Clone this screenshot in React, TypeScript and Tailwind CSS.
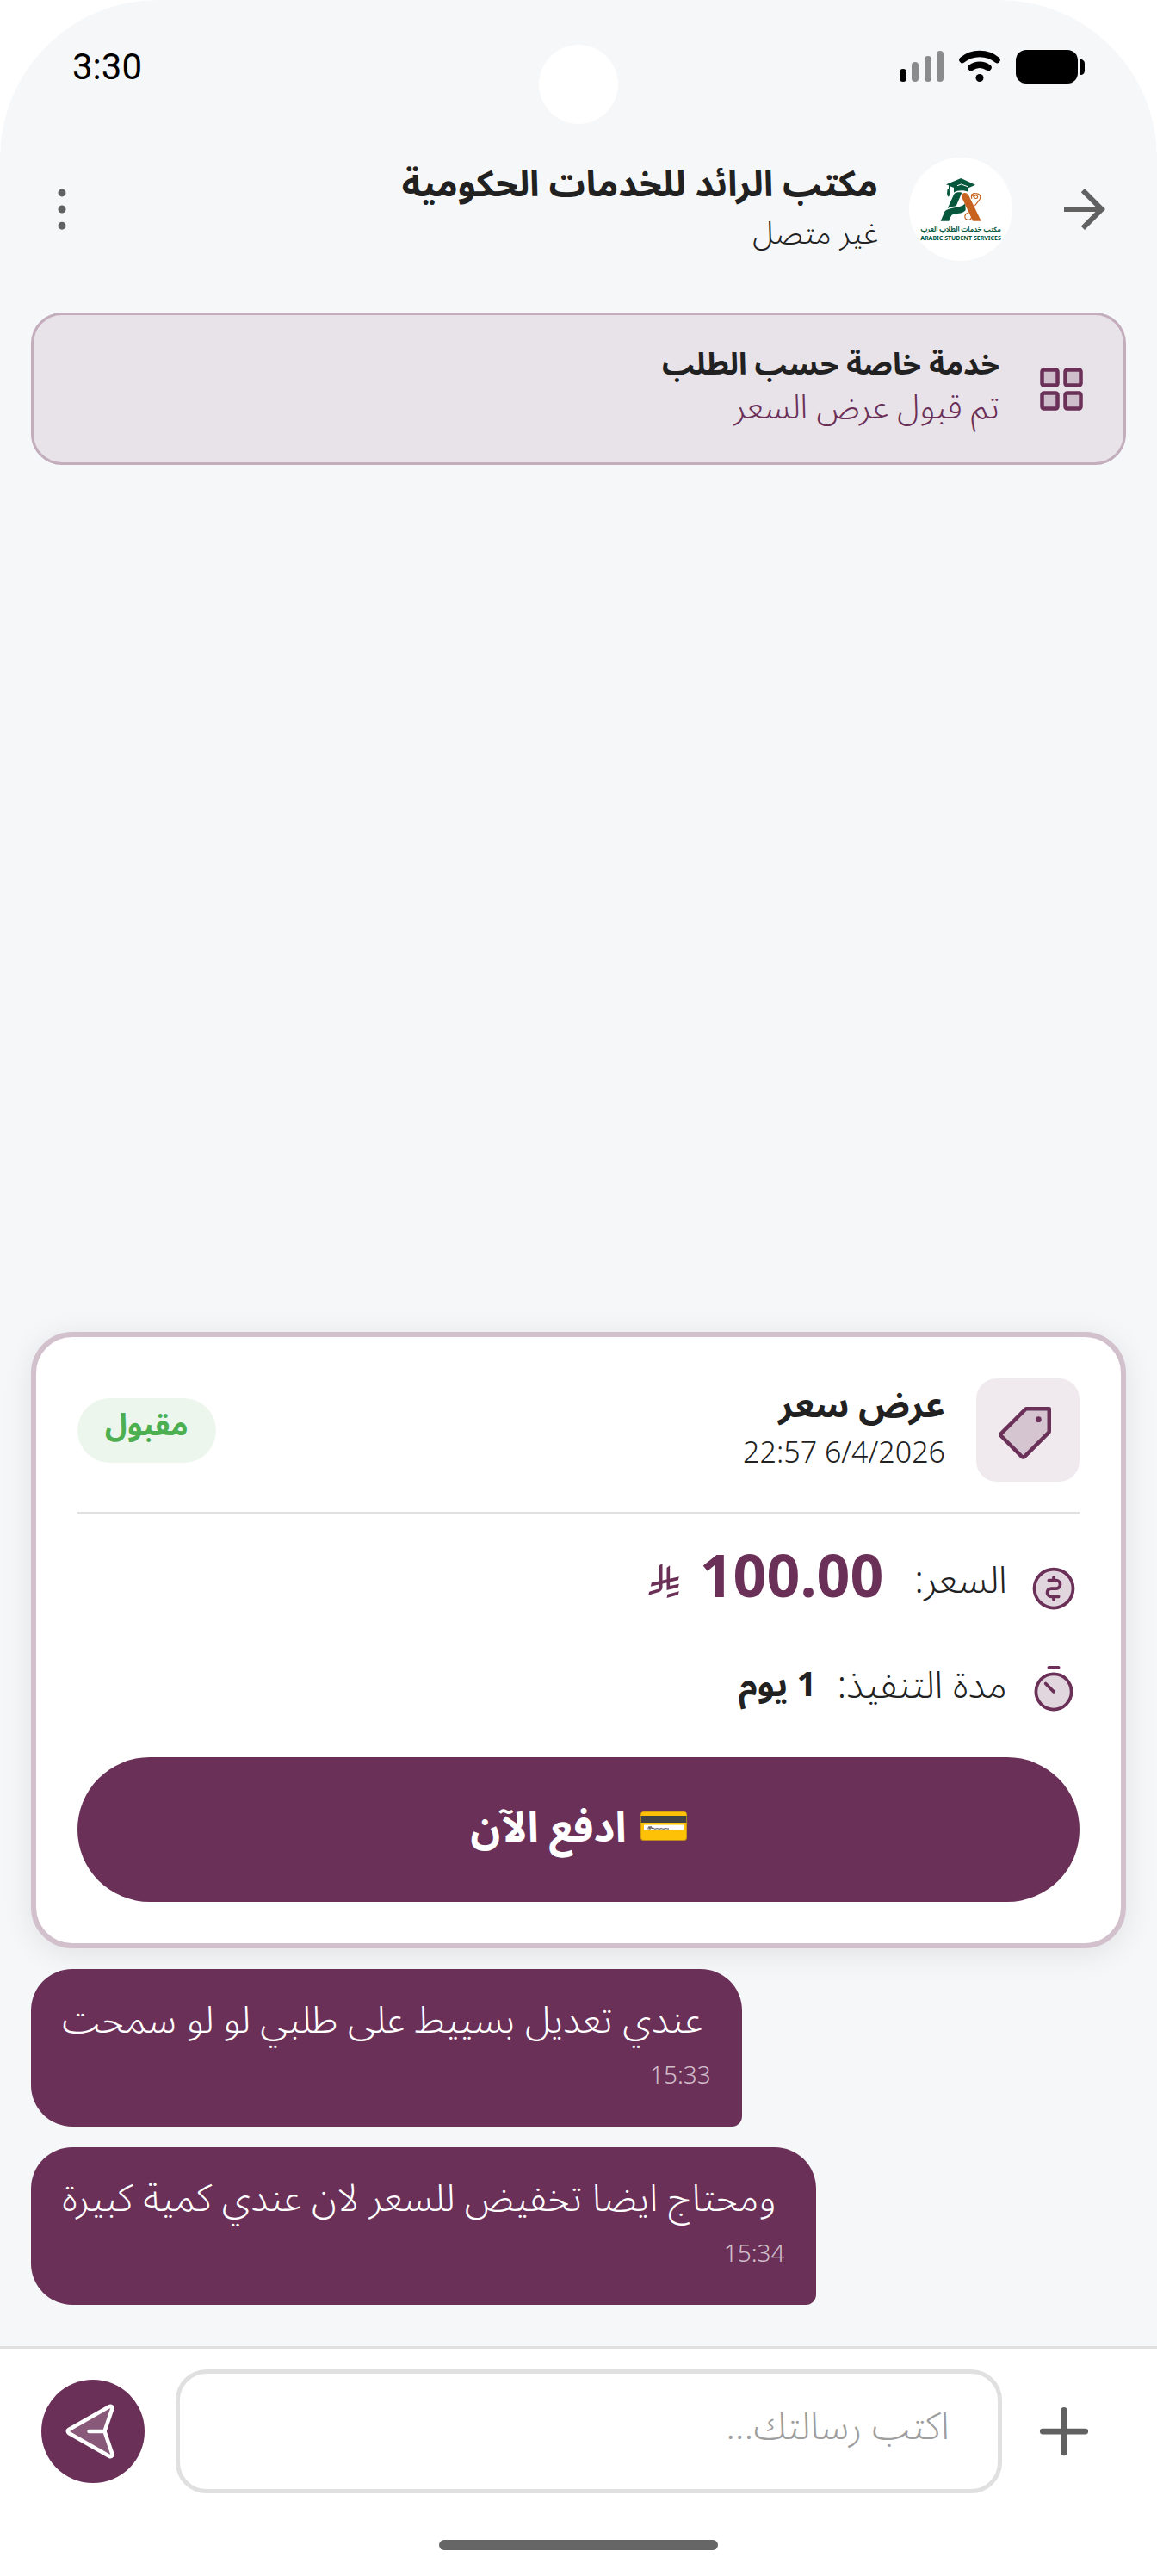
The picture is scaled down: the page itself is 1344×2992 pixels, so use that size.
import React from 'react'
import { MdArrowForward } from 'react-icons/md'
import {
  PiCurrencyCircleDollarDuotone,
  PiDotsThreeVerticalBold,
  PiPaperPlaneRightDuotone,
  PiPlusBold,
  PiSquaresFourDuotone,
  PiTagDuotone,
  PiTimerDuotone,
} from 'react-icons/pi'

const messages = [
  { id: 1, text: 'عندي تعديل بسييط على طلبي لو لو سمحت', time: '15:33' },
  { id: 2, text: 'ومحتاج ايضا تخفيض للسعر لان عندي كمية كبيرة', time: '15:34' },
]

function StatusBar() {
  return (
    <div
      dir="ltr"
      className="relative flex h-[147px] items-center justify-between px-[84px] pt-2"
    >
      <span className="font-[Roboto,sans-serif] text-[42px] leading-[48px] text-black">
        3:30
      </span>
      <div className="absolute top-[52px] left-1/2 h-[92px] w-[92px] -translate-x-1/2 rounded-full bg-white" />
      <svg width="215" height="40" viewBox="0 0 215 40" aria-hidden="true">
        <rect x="0" y="22" width="8" height="15" rx="4" />
        <g fill="#8a8b8c">
          <rect x="14" y="14" width="8" height="23" rx="4" />
          <rect x="29" y="7" width="8" height="30" rx="4" />
          <rect x="43" y="1" width="8" height="36" rx="4" />
        </g>
        <g fill="none" stroke="#000" strokeLinecap="round">
          <path d="M73 11.500C84 2 102 2 113 11.500" strokeWidth="7.500" />
          <path d="M83 20.500C89 16 97 16 103 20.500" strokeWidth="7.500" />
        </g>
        <circle cx="93" cy="32.500" r="4.500" />
        <rect x="135" y="0" width="72" height="39" rx="12" />
        <path d="M210 11c3 0 5 2 5 5v8c0 3-2 5-5 5z" />
      </svg>
    </div>
  )
}

function OfficeLogo() {
  return (
    <svg
      viewBox="48 39 360 360"
      className="h-[120px] w-[120px] shrink-0 rounded-full bg-white"
      role="img"
      aria-label="مكتب خدمات الطلاب العرب"
    >
      <g fill="#07573d">
        <path d="M229 111l50 23-24 11v14c-14-7-37-8-51 2v-17l-15-6v12h-3v-14l-9-3z" />
        <path d="M182 148h6l2 17-3 10h-4l-3-10z" />
        <path d="M205 166c6-6 16-7 27-5l-20 47c-11 2-20 4-30 8z" />
        <path d="M158 260l15-34c12-10 32-12 48-15 10-2 18-6 23-12l1 24c-9 10-24 11-40 13-6 1-9 3-11 8l-7 16z" />
      </g>
      <path d="M216 137l14-5 22 8" fill="none" stroke="#fff" strokeWidth="3" />
      <path
        d="M231 176c-1-17 18-19 25-5l43 89h-29z"
        fill="#c7631f"
      />
      <g fill="none" stroke="#c7631f" strokeWidth="3.500" strokeLinecap="round">
        <path d="M266 181c-3-12 4-18 13-17 16 0 21 11 15 21l-16 21" />
        <path d="M275 178c-2-8 11-10 12-2 0 6-8 7-11 3l-10-11" />
        <path d="M253 232c-14 4-14 22 0 24 7 1 11-3 12-8" />
      </g>
      <g
        fill="#07573d"
        textAnchor="middle"
        fontFamily="Noto Sans, Noto Sans Arabic, sans-serif"
        fontWeight="700"
      >
        <text x="228" y="297" fontSize="23" direction="rtl">
          مكتب خدمات الطلاب العرب
        </text>
        <text x="228" y="326" fontSize="21">
          ARABIC STUDENT SERVICES
        </text>
      </g>
    </svg>
  )
}

function Header() {
  return (
    <header className="flex items-center py-9 pr-12 pl-9">
      <button type="button" aria-label="رجوع" className="text-[#616161]">
        <MdArrowForward size={72} />
      </button>
      <div className="mr-12">
        <OfficeLogo />
      </div>
      <div className="mr-9 flex-1 self-start leading-[58px]">
        <h1 className="text-[42px] font-bold">مكتب الرائد للخدمات الحكومية</h1>
        <p className="text-[36px] font-light">غير متصل</p>
      </div>
      <button type="button" aria-label="المزيد" className="text-[#616161]">
        <PiDotsThreeVerticalBold size={72} />
      </button>
    </header>
  )
}

function ServiceCard() {
  return (
    <section className="flex min-h-[177px] items-center gap-9 rounded-[36px] border-3 border-[#c3adbd] bg-[#e8e2e9] px-9">
      <PiSquaresFourDuotone size={72} className="shrink-0 text-[#6b3058]" />
      <div className="flex-1 pb-3 leading-[49px]">
        <h2 className="text-[35px] font-bold">خدمة خاصة حسب الطلب</h2>
        <p className="text-[39px] font-light text-[#6b3058]">
          تم قبول عرض السعر
        </p>
      </div>
    </section>
  )
}

function RiyalSign() {
  return (
    <svg
      viewBox="82 105 107 120"
      className="mt-[14px] h-10 w-9 text-[#6b3058]"
      fill="currentColor"
      role="img"
      aria-label="ريال"
    >
      <path d="M120 112l11-7v82c0 7-3 13-11 17l-38 11 3-12 31-9c3-1 4-3 4-6z" />
      <path d="M146 120l11-8v71l32-7-3 12-40 10z" />
      <path d="M189 151l-3 12-96 22 3-13z" />
      <path d="M189 202l-3 12-40 11 3-13z" />
    </svg>
  )
}

function CreditCard() {
  return (
    <svg width="54" height="34" viewBox="0 0 54 34" aria-hidden="true">
      <rect width="54" height="34" rx="3.500" fill="#b8891b" />
      <rect x="0.700" y="0.500" width="52.600" height="32.500" rx="3" fill="#ffc107" />
      <rect x="0.700" y="5" width="52.600" height="8" fill="#424242" />
      <rect x="4" y="15.500" width="46" height="6" fill="#fff" />
      <path
        d="M9 20.500c0-4 2-4 2 0 0-4 2-4 2-.5 2-2 3 1 5 0s3 1 5 0 3 1 5 0 3 .5 5 0"
        fill="none"
        stroke="#333"
        strokeWidth="1"
      />
    </svg>
  )
}

function OfferCard() {
  return (
    <section className="rounded-[48px] border-6 border-[#d2c0cc] bg-white p-12 shadow-[0_6px_36px_rgba(0,0,0,0.09)]">
      <div className="flex items-center">
        <div className="flex h-[120px] w-[120px] shrink-0 items-center justify-center rounded-[24px] bg-[#f0eaee] text-[#6b3058]">
          <PiTagDuotone size={72} className="-scale-x-100" />
        </div>
        <div className="mr-9 flex-1 self-start leading-[57px]">
          <h2 className="text-[42px] font-bold">عرض سعر</h2>
          <p className="text-[34px] font-light">6/4/2026 22:57</p>
        </div>
        <span className="rounded-full bg-[#ecf6ed] px-8 pb-4 text-[35px] leading-[59px] font-bold text-[#4caf50]">
          مقبول
        </span>
      </div>

      <hr className="mt-[35px] border-t-3 border-[#e0e0e0]" />

      <div className="mt-6 flex h-[92px] items-center">
        <PiCurrencyCircleDollarDuotone
          size={60}
          className="shrink-0 -scale-x-100 self-end text-[#6b3058]"
        />
        <span className="mr-6 pt-2 text-[44px] leading-[60px] font-light">
          السعر:
        </span>
        <span className="mr-9 text-[68px] leading-[92px] font-bold text-[#6b3058]">
          100.00
        </span>
        <span className="mr-6">
          <RiyalSign />
        </span>
      </div>

      <div className="mt-[46px] flex h-[72px] items-center">
        <PiTimerDuotone
          size={60}
          className="shrink-0 -scale-x-100 self-end text-[#6b3058]"
        />
        <span className="mr-6 pb-1 text-[44px] leading-[60px] font-light">
          مدة التنفيذ:
        </span>
        <span className="mr-6 pb-1 text-[40px] leading-[60px] font-bold">
          1 يوم
        </span>
      </div>

      <button
        type="button"
        className="mt-12 flex h-[168px] w-full items-center justify-center gap-4 rounded-full bg-[#6b3058] pb-2 text-[48px] font-bold text-white"
      >
        <CreditCard />
        ادفع الآن
      </button>
    </section>
  )
}

function Message({ text, time }) {
  return (
    <div className="self-end rounded-[48px] rounded-br-[12px] bg-[#6b3058] px-9 pt-6 pb-10 text-white">
      <p className="pr-2.5 text-[44px] leading-[66px] font-light">{text}</p>
      <time className="mt-3 block text-[28px] leading-[41px] font-light text-white/70">
        {time}
      </time>
    </div>
  )
}

function Composer() {
  return (
    <footer className="border-t-3 border-[#e0e0e0] bg-white pt-6">
      <form
        className="flex items-center gap-9 pr-[72px] pl-12"
        onSubmit={(e) => e.preventDefault()}
      >
        <button type="button" aria-label="إضافة" className="text-[#616161]">
          <PiPlusBold size={72} />
        </button>
        <input
          type="text"
          aria-label="رسالتك"
          placeholder="اكتب رسالتك..."
          className="h-36 min-w-0 flex-1 rounded-[36px] border-5 border-[#e0e0e0] bg-white px-14 pb-4 text-[44px] font-light placeholder:text-[#9e9e9e]"
        />
        <button
          type="submit"
          aria-label="إرسال"
          className="flex h-[120px] w-[120px] shrink-0 items-center justify-center rounded-full bg-[#6b3058] text-white"
        >
          <PiPaperPlaneRightDuotone size={72} className="-scale-x-100" />
        </button>
      </form>
      <div className="mx-auto mt-[54px] mb-[30px] h-3 w-[324px] rounded-full bg-[#666666]" />
    </footer>
  )
}

export default function App() {
  return (
    <div
      dir="rtl"
      lang="ar"
      className="flex min-h-screen flex-col rounded-t-[184px] bg-[#f5f7f9] font-['Noto_Sans','Noto_Sans_Arabic',sans-serif] text-[#212121]"
    >
      <StatusBar />
      <Header />
      <main className="flex flex-1 flex-col px-9 pt-6 pb-12">
        <ServiceCard />
        <div className="flex flex-1 flex-col justify-end gap-6 pt-12">
          <OfferCard />
          {messages.map((m) => (
            <Message key={m.id} text={m.text} time={m.time} />
          ))}
        </div>
      </main>
      <Composer />
    </div>
  )
}
